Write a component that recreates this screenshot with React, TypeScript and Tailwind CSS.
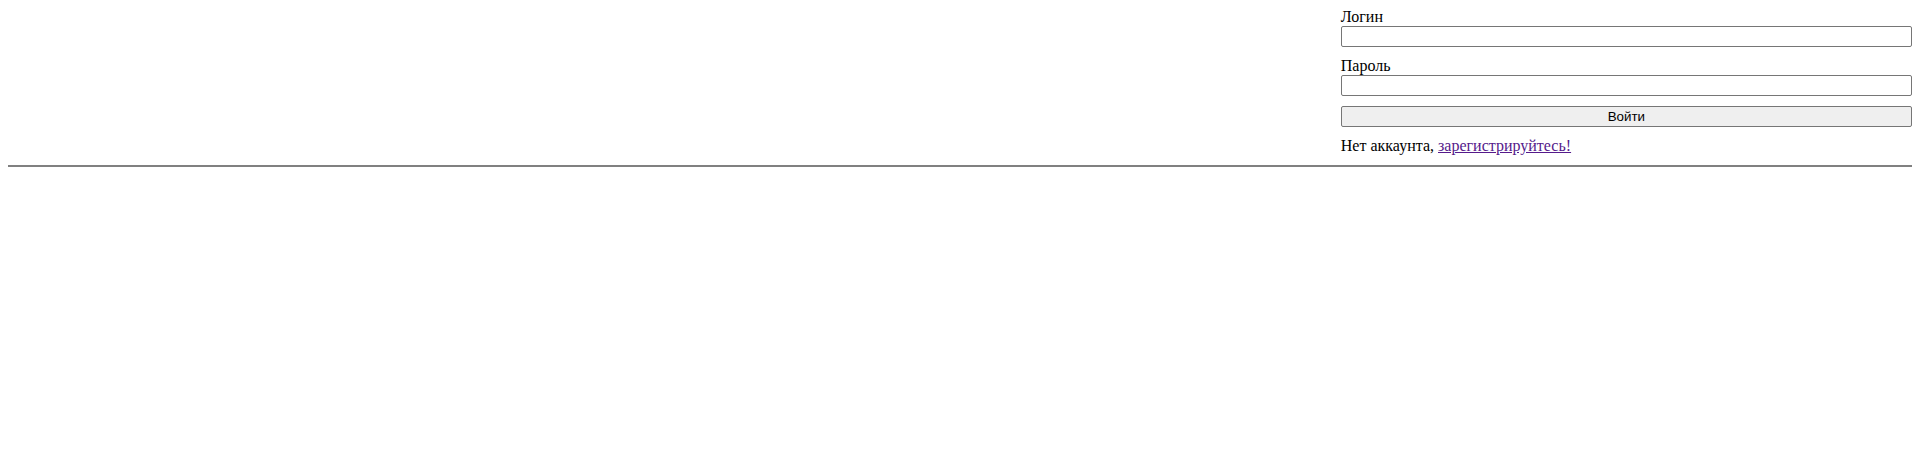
export default function App() {
  return (
    <div className="min-h-screen bg-white p-2 font-['Liberation_Serif',serif] text-[16px] leading-[normal] text-black">
      <div className="flex">
        <div className="w-[70%]" />
        <form className="flex w-[30%] flex-col gap-[10px]" onSubmit={(e) => e.preventDefault()}>
          <div className="flex flex-col">
            <label htmlFor="login">Логин</label>
            <input
              id="login"
              type="text"
              className="h-[21px] w-full rounded-[2px] border border-[#767676] bg-white px-[2px] font-['Liberation_Sans',sans-serif] text-[13.33px] outline-none"
            />
          </div>
          <div className="flex flex-col">
            <label htmlFor="password">Пароль</label>
            <input
              id="password"
              type="password"
              className="h-[21px] w-full rounded-[2px] border border-[#767676] bg-white px-[2px] font-['Liberation_Sans',sans-serif] text-[13.33px] outline-none"
            />
          </div>
          <button
            type="submit"
            className="h-[21px] w-full rounded-[2px] border border-[#767676] bg-[#efefef] px-[6px] font-['Liberation_Sans',sans-serif] text-[13.33px] text-black"
          >
            Войти
          </button>
          <div>
            Нет аккаунта,{' '}
            <a href="#" className="text-[#551a8b] underline">
              зарегистрируйтесь!
            </a>
          </div>
        </form>
      </div>
      <hr className="mt-[10px] border-0 border-t-2 border-[#808080]" />
    </div>
  );
}
